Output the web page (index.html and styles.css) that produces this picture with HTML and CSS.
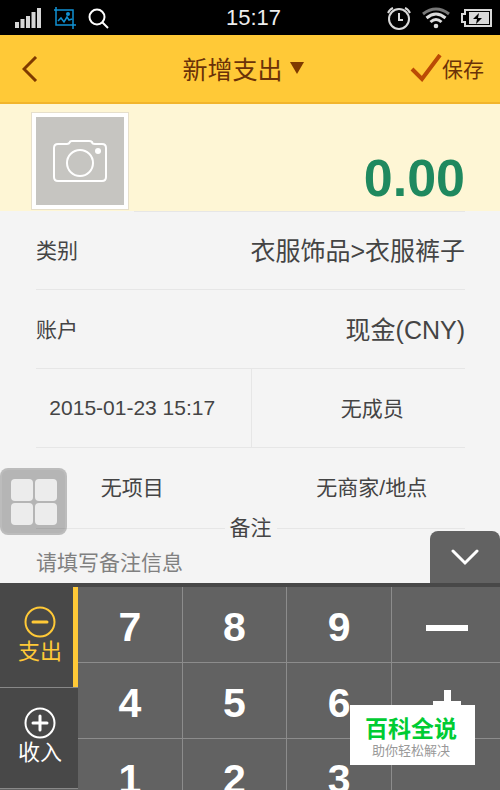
FILE: index.html
```html
<!DOCTYPE html>
<html lang="zh-CN">
<head>
  <meta charset="UTF-8">
  <meta name="viewport" content="width=device-width, initial-scale=1.0">
  <title>新增支出</title>
  <link rel="stylesheet" href="styles.css">
</head>
<body>
  <div class="screen">
    <div class="status">
      <div class="status-side status-left">
        <svg width="27" height="20" viewBox="0 0 27 20" fill="#d6d6d6">
          <path d="M0 14h4v6H0zM5.500 11h4v9h-4zM11 8h4v12h-4zM16.500 4h4v16h-4zM22 0h4v20h-4z"/>
        </svg>
        <svg width="22" height="22" viewBox="0 0 22 22" fill="none" stroke="#1091d3" stroke-width="1.500">
          <path d="M2 0v18h20M0 3h19v19M4 14l3-3 3 4 3-5 2 3 3-1"/>
          <circle cx="14" cy="7" r="2" fill="#1091d3" stroke="none"/>
        </svg>
        <svg width="22" height="22" viewBox="0 0 22 22" fill="none" stroke="#fff" stroke-width="2">
          <circle cx="9" cy="10" r="7.500"/>
          <path d="M14 15l6 6"/>
        </svg>
      </div>
      <span class="clock">15:17</span>
      <div class="status-side status-right">
        <svg width="24" height="24" viewBox="0 0 24 24" fill="none" stroke="#d9d9d9" stroke-width="2">
          <circle cx="12" cy="13" r="10"/>
          <path d="M12 7v7h4M1 7q2-4 5-5M23 7q-2-4-5-5"/>
        </svg>
        <svg width="28" height="22" viewBox="0 0 28 22" fill="none" stroke-width="3">
          <path d="M1 7Q14-3 27 7" stroke="#777"/>
          <path d="M4.500 11q9.500-8 19 0M8.500 15q5.500-5 11 0" stroke="#ddd"/>
          <circle cx="14" cy="19" r="2.300" fill="#ddd"/>
        </svg>
        <svg width="31" height="18" viewBox="0 0 31 18">
          <path d="M4 1h26v16H4v-4H1V5h3z" fill="none" stroke="#d9d9d9" stroke-width="2"/>
          <path d="M8 3h20v12H8z" fill="#d9d9d9"/>
          <path d="M18 4l-6 6h4l-1 5 6-6h-4z" fill="#000"/>
        </svg>
      </div>
    </div>

    <header class="header">
      <button class="back" aria-label="返回">
        <svg width="16" height="26" viewBox="0 0 16 26" fill="none" stroke="#7f3a00" stroke-width="3">
          <path d="M14 1L2 13l12 12"/>
        </svg>
      </button>
      <button class="title">
        新增支出
        <svg width="14" height="12" viewBox="0 0 14 12" fill="#7f3a00"><path d="M0 0h14L7 12z"/></svg>
      </button>
      <button class="save">
        <svg width="32" height="28" viewBox="0 0 32 28" fill="none" stroke="#bb4a05" stroke-width="4">
          <path d="M2 15l10 10L30 1"/>
        </svg>
        保存
      </button>
    </header>

    <section class="amount">
      <button class="photo" aria-label="添加照片">
        <svg width="54" height="43" viewBox="0 0 54 43" fill="none" stroke="#fff" stroke-width="2">
          <path d="M5 4h9q2 0 3-2 0-1 2-1h17q2 0 3 1 0 2 3 2h7q4 0 4 4v29q0 4-4 4H5q-4 0-4-4V8q0-4 4-4z"/>
          <circle cx="27" cy="23" r="13"/>
          <circle cx="45" cy="11" r="3" fill="#fff" stroke="none"/>
        </svg>
      </button>
      <output class="sum">0.00</output>
    </section>

    <main class="form">
      <button class="row"><span>类别</span><span class="value">衣服饰品&gt;衣服裤子</span></button>
      <button class="row"><span>账户</span><span class="value">现金(CNY)</span></button>
      <div class="pair">
        <button class="cell">2015-01-23 15:17</button>
        <button class="cell">无成员</button>
      </div>
      <div class="pair last">
        <button class="cell">无项目</button>
        <button class="cell">无商家/地点</button>
      </div>
      <label class="note-label" for="note">备注</label>
      <input class="note" id="note" type="text" placeholder="请填写备注信息">
      <button class="assist" aria-label="快捷菜单"><i></i><i></i><i></i><i></i></button>
      <button class="collapse" aria-label="收起键盘">
        <svg width="28" height="18" viewBox="0 0 28 18" fill="none" stroke="#fff" stroke-width="3" stroke-linecap="round">
          <path d="M2 3l12 12L26 3"/>
        </svg>
      </button>
    </main>

    <section class="keyboard">
      <div class="types">
        <button class="type active">
          <svg width="32" height="32" viewBox="0 0 32 32" fill="none" stroke="currentColor" stroke-width="2">
            <circle cx="16" cy="16" r="14.500"/>
            <path d="M9 16h14" stroke-width="3" stroke-linecap="round"/>
          </svg>
          支出
        </button>
        <button class="type">
          <svg width="32" height="32" viewBox="0 0 32 32" fill="none" stroke="currentColor" stroke-width="2">
            <circle cx="16" cy="16" r="14.500"/>
            <path d="M9 16h14M16 9v14" stroke-width="3" stroke-linecap="round"/>
          </svg>
          收入
        </button>
      </div>
      <div class="keys">
        <button>7</button>
        <button>8</button>
        <button>9</button>
        <button aria-label="减">
          <svg width="42" height="6" viewBox="0 0 42 6" fill="#fff"><path d="M0 0h42v6H0z"/></svg>
        </button>
        <button>4</button>
        <button>5</button>
        <button>6</button>
        <button aria-label="加">
          <svg width="28" height="28" viewBox="0 0 28 28" fill="#fff"><path d="M11 0h7v11h10v6H18v11h-7V17H0v-6h11z"/></svg>
        </button>
        <button>1</button>
        <button>2</button>
        <button>3</button>
        <button aria-label="确定"></button>
      </div>
    </section>

    <div class="badge">
      <strong>百科全说</strong>
      <span>助你轻松解决</span>
    </div>
  </div>
</body>
</html>
```

FILE: styles.css
```css
* {
  box-sizing: border-box;
}

body {
  margin: 0;
  font-family: "Liberation Sans", "Noto Sans CJK SC", sans-serif;
  font-size: 21px;
  color: #444;
  background: #f4f4f4;
}

button {
  font: inherit;
  color: inherit;
  background: none;
  border: none;
  padding: 0;
  cursor: pointer;
}

svg {
  display: block;
  flex: none;
}

.screen {
  position: relative;
  display: flex;
  flex-direction: column;
  height: 100vh;
  overflow: hidden;
}

/* status bar */
.status {
  display: flex;
  align-items: center;
  flex: none;
  height: 35px;
  padding: 0 8px;
  background: #000;
  color: #eee;
}

.status-side {
  display: flex;
  align-items: center;
  flex: 1;
  gap: 12px;
}

.status-left {
  padding-left: 7px;
}

.status-right {
  justify-content: flex-end;
  gap: 11px;
}

.clock {
  font-size: 22px;
}

/* header */
.header {
  display: grid;
  grid-template-columns: 1fr auto 1fr;
  align-items: center;
  flex: none;
  height: 69px;
  padding: 0 16px 0 22px;
  background: #ffc937;
  border-bottom: 2px solid #f2b52c;
  color: #6b3208;
}

.back {
  justify-self: start;
}

.title {
  display: flex;
  align-items: center;
  gap: 7px;
  margin-right: 20px;
  padding-bottom: 2px;
  font-size: 25px;
}

.save {
  display: flex;
  align-items: center;
  justify-self: end;
  padding-bottom: 2px;
}

/* amount */
.amount {
  display: flex;
  justify-content: space-between;
  align-items: flex-start;
  flex: none;
  height: 107px;
  padding: 8px 35px 0 31px;
  background: #fef6d5;
}

.photo {
  display: flex;
  align-items: center;
  justify-content: center;
  width: 98px;
  height: 98px;
  background: #c6c5c1;
  border: 1px solid #e6dfcb;
  box-shadow: inset 0 0 0 4px #fff;
}

.sum {
  align-self: flex-end;
  font-size: 52px;
  line-height: 66px;
  font-weight: bold;
  color: #1f895f;
}

/* form */
.form {
  position: relative;
  display: flex;
  flex-direction: column;
  flex: none;
  padding: 0 35px 0 36px;
}

.form::before {
  content: "";
  height: 1px;
  margin: 0 0 -1px 98px;
  background: #e6e6e6;
}

.row,
.pair {
  display: flex;
  height: 79px;
  border-bottom: 1px solid #e6e6e6;
}

.row {
  align-items: center;
  justify-content: space-between;
  padding-bottom: 3px;
}

.value {
  font-size: 25px;
}

.cell {
  flex: 1 0 50%;
  padding: 0 22px 0 0;
}

.cell + .cell {
  padding: 0 0 2px 28px;
  border-left: 1px solid #e6e6e6;
}

.last {
  padding-bottom: 2px;
  border-bottom: none;
}

.last .cell {
  padding-bottom: 2px;
  border-left: none;
}

.note-label {
  display: flex;
  align-items: center;
  gap: 5px;
  margin-top: -13px;
  line-height: 28px;
}

.note-label::before,
.note-label::after {
  content: "";
  flex: 1;
  height: 1px;
  background: #e6e6e6;
}

.note {
  height: 41px;
  padding: 0;
  font: inherit;
  color: #444;
  background: none;
  border: none;
  outline: none;
}

.note::placeholder {
  color: #808080;
  opacity: 1;
}

.assist {
  position: absolute;
  left: 0;
  bottom: 48px;
  display: grid;
  grid-template-columns: 22px 22px;
  gap: 2px;
  align-content: center;
  justify-content: center;
  width: 67px;
  height: 67px;
  background: rgba(0, 0, 0, 0.26);
  border: 2px solid rgba(255, 255, 255, 0.1);
  border-radius: 8px;
}

.assist i {
  height: 22px;
  border-radius: 4px;
  background: #ececec;
}

.collapse {
  position: absolute;
  right: 0;
  bottom: 0;
  display: flex;
  align-items: center;
  justify-content: center;
  width: 70px;
  height: 52px;
  background: #626262;
  border-radius: 8px 8px 0 0;
}

/* keyboard */
.keyboard {
  display: flex;
  flex: 1;
  min-height: 0;
  border-top: 4px solid #484848;
  background: #626262;
}

.types {
  flex: none;
  width: 78px;
}

.type {
  display: flex;
  flex-direction: column;
  align-items: center;
  justify-content: center;
  width: 100%;
  height: 101px;
  padding: 0 0 3px 2px;
  font-size: 22px;
  line-height: 27px;
  color: #fff;
  background: #484848;
  border-bottom: 1px solid #888;
}

.active {
  color: #ffc937;
  box-shadow: inset -5px 0 #ffc937;
}

.keys {
  display: grid;
  grid-template-columns: repeat(3, 30fr) 31fr;
  grid-auto-rows: 76px;
  flex: 1;
}

.keys button {
  display: flex;
  align-items: center;
  justify-content: center;
  padding-top: 6px;
  font-size: 41px;
  font-weight: bold;
  color: #fff;
  border-right: 1px solid #8c8c8c;
  border-bottom: 1px solid #8c8c8c;
}

.keys button:nth-child(4n) {
  padding-left: 3px;
  border-right: none;
}

.badge {
  position: absolute;
  right: 25px;
  bottom: 25px;
  display: flex;
  flex-direction: column;
  align-items: center;
  justify-content: center;
  width: 125px;
  height: 60px;
  padding: 3px 3px 0 0;
  background: #fff;
  font-size: 13px;
  line-height: 16px;
  color: #999;
}

.badge strong {
  font-size: 23px;
  line-height: 28px;
  font-weight: bold;
  color: #0c3;
}
```
